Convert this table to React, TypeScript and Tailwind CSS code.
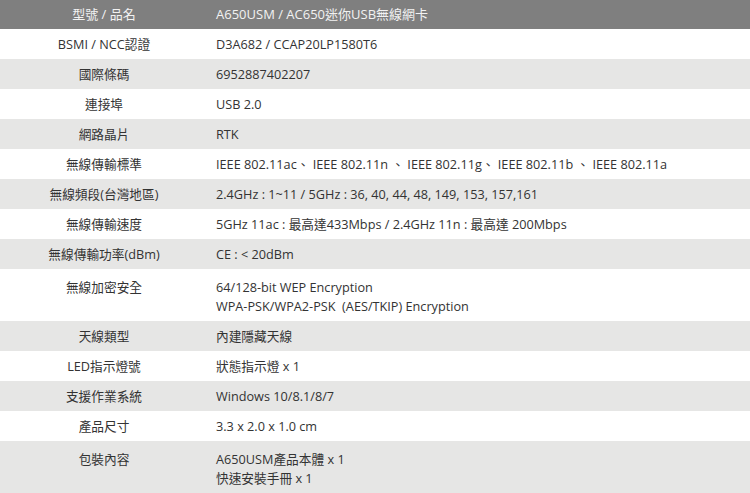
const rows: { label: string; value: string[] }[] = [
  { label: 'BSMI / NCC認證', value: ['D3A682 / CCAP20LP1580T6'] },
  { label: '國際條碼', value: ['6952887402207'] },
  { label: '連接埠', value: ['USB 2.0'] },
  { label: '網路晶片', value: ['RTK'] },
  {
    label: '無線傳輸標準',
    value: ['IEEE 802.11ac、 IEEE 802.11n 、 IEEE 802.11g、 IEEE 802.11b 、 IEEE 802.11a'],
  },
  { label: '無線頻段(台灣地區)', value: ['2.4GHz : 1~11 / 5GHz : 36, 40, 44, 48, 149, 153, 157,161'] },
  { label: '無線傳輸速度', value: ['5GHz 11ac : 最高達433Mbps / 2.4GHz 11n : 最高達 200Mbps'] },
  { label: '無線傳輸功率(dBm)', value: ['CE : < 20dBm'] },
  {
    label: '無線加密安全',
    value: ['64/128-bit WEP Encryption', 'WPA-PSK/WPA2-PSK  (AES/TKIP) Encryption'],
  },
  { label: '天線類型', value: ['內建隱藏天線'] },
  { label: 'LED指示燈號', value: ['狀態指示燈 x 1'] },
  { label: '支援作業系統', value: ['Windows 10/8.1/8/7'] },
  { label: '產品尺寸', value: ['3.3 x 2.0 x 1.0 cm'] },
  { label: '包裝內容', value: ['A650USM產品本體 x 1', '快速安裝手冊 x 1'] },
];

export default function App() {
  return (
    <div
      className="w-[750px] h-[493px] overflow-hidden bg-white text-[12.7px] text-[#333]"
      style={{ fontFamily: '"Open Sans", "Noto Sans CJK TC", sans-serif' }}
    >
      {/* Header */}
      <div className="flex h-[29px] items-center bg-[#7f7f7f] text-[#f2f2f2] text-[13px]">
        <div className="w-[208px] text-center">型號 / 品名</div>
        <div className="pl-2">A650USM / AC650迷你USB無線網卡</div>
      </div>

      {rows.map((row, i) => {
        const multi = row.value.length > 1;
        return (
          <div
            key={row.label}
            className={`flex leading-[19px] ${i % 2 === 1 ? 'bg-[#e6e6e5]' : 'bg-white'} ${
              multi ? 'pt-[9px] pb-[5px]' : 'h-[30px] items-center'
            }`}
          >
            <div className="w-[208px] shrink-0 text-center">{row.label}</div>
            <div className="pl-2 whitespace-pre">
              {row.value.map((v) => (
                <div key={v}>{v}</div>
              ))}
            </div>
          </div>
        );
      })}
    </div>
  );
}
